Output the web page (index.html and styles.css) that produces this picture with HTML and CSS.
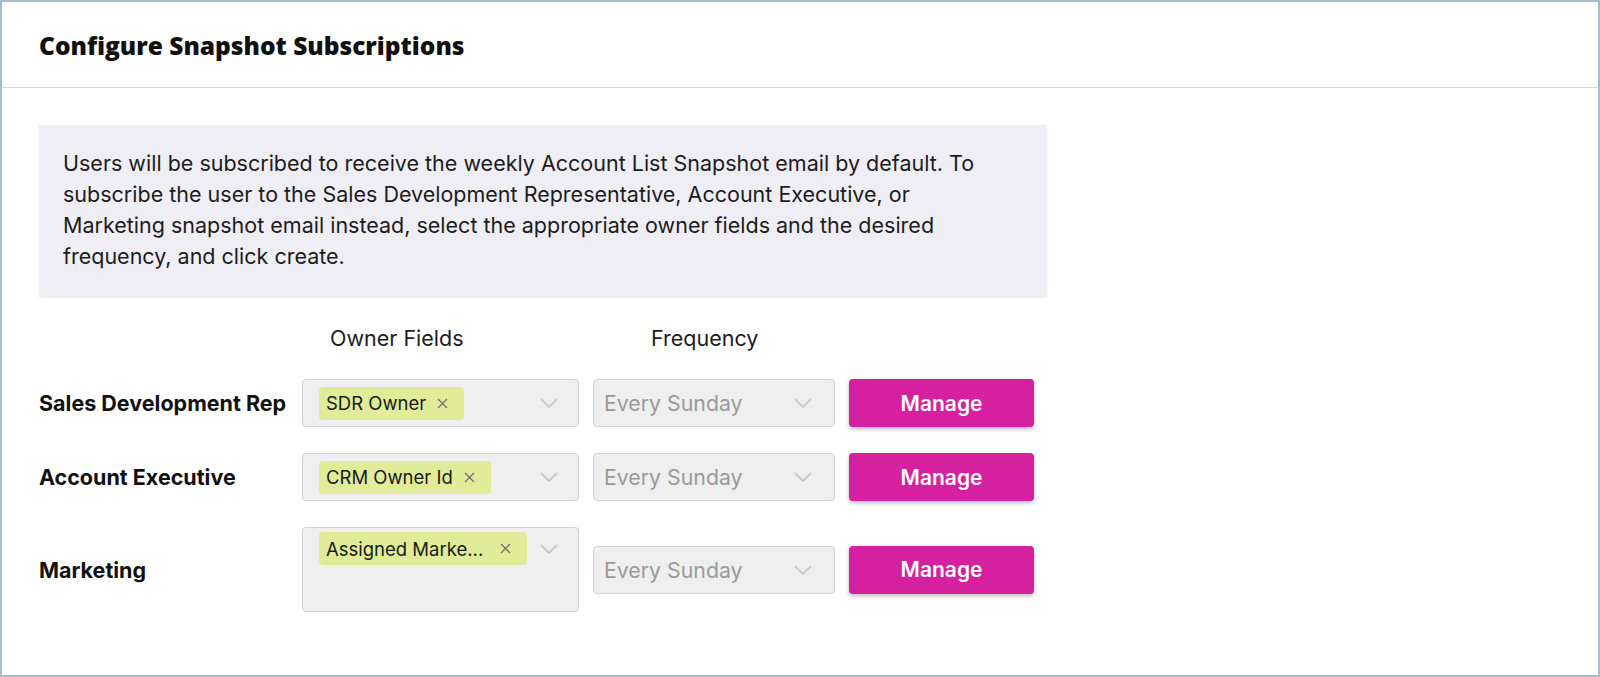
FILE: index.html
```html
<!DOCTYPE html>
<html>
<head>
<meta charset="utf-8">
<link rel="stylesheet" href="styles.css">
</head>
<body>
<div class="frame">
  <header class="header">
    <h1 class="title">Configure Snapshot Subscriptions</h1>
  </header>
  <main class="content">
    <div class="info">
      Users will be subscribed to receive the weekly Account List Snapshot email by default. To subscribe the user to the Sales Development Representative, Account Executive, or Marketing snapshot email instead, select the appropriate owner fields and the desired frequency, and click create.
    </div>
    <div class="grid">
      <div></div>
      <div class="col-head owner-head">Owner Fields</div>
      <div class="col-head freq-head">Frequency</div>
      <div></div>

      <div class="label">Sales Development Rep</div>
      <div class="select owner">
        <div class="chips"><span class="chip"><span class="chip-text">SDR Owner</span><svg class="chip-x" width="11" height="11" viewBox="0 0 11 11"><path d="M1 1L10 10M10 1L1 10" stroke="#707070" stroke-width="1.3"/></svg></span></div>
        <div class="indicator"><svg width="18" height="10" viewBox="0 0 18 10"><polyline points="1,1 9,9 17,1" fill="none" stroke="#cbcbcb" stroke-width="2"/></svg></div>
      </div>
      <div class="select freq">
        <span class="freq-text">Every Sunday</span>
        <div class="indicator"><svg width="18" height="10" viewBox="0 0 18 10"><polyline points="1,1 9,9 17,1" fill="none" stroke="#cbcbcb" stroke-width="2"/></svg></div>
      </div>
      <button class="btn">Manage</button>

      <div class="label">Account Executive</div>
      <div class="select owner">
        <div class="chips"><span class="chip"><span class="chip-text">CRM Owner Id</span><svg class="chip-x" width="11" height="11" viewBox="0 0 11 11"><path d="M1 1L10 10M10 1L1 10" stroke="#707070" stroke-width="1.3"/></svg></span></div>
        <div class="indicator"><svg width="18" height="10" viewBox="0 0 18 10"><polyline points="1,1 9,9 17,1" fill="none" stroke="#cbcbcb" stroke-width="2"/></svg></div>
      </div>
      <div class="select freq">
        <span class="freq-text">Every Sunday</span>
        <div class="indicator"><svg width="18" height="10" viewBox="0 0 18 10"><polyline points="1,1 9,9 17,1" fill="none" stroke="#cbcbcb" stroke-width="2"/></svg></div>
      </div>
      <button class="btn">Manage</button>

      <div class="label">Marketing</div>
      <div class="select owner tall">
        <div class="chips"><span class="chip"><span class="chip-text">Assigned Marke...</span><svg class="chip-x wide" width="11" height="11" viewBox="0 0 11 11"><path d="M1 1L10 10M10 1L1 10" stroke="#707070" stroke-width="1.3"/></svg></span></div>
        <div class="indicator"><svg width="18" height="10" viewBox="0 0 18 10"><polyline points="1,1 9,9 17,1" fill="none" stroke="#cbcbcb" stroke-width="2"/></svg></div>
      </div>
      <div class="select freq">
        <span class="freq-text">Every Sunday</span>
        <div class="indicator"><svg width="18" height="10" viewBox="0 0 18 10"><polyline points="1,1 9,9 17,1" fill="none" stroke="#cbcbcb" stroke-width="2"/></svg></div>
      </div>
      <button class="btn">Manage</button>
    </div>
  </main>
</div>
</body>
</html>
```

FILE: styles.css
```css
* { box-sizing: border-box; }
html, body { margin: 0; padding: 0; background: #fff; }
body { font-family: Inter, "Liberation Sans", sans-serif; color: #1b1b1b; }

.frame {
  width: 1600px;
  height: 677px;
  border: 2px solid #a5bdcb;
  background: #fff;
}

.header {
  height: 86px;
  border-bottom: 1px solid #d3d6d9;
  display: flex;
  align-items: center;
  padding-left: 37px;
}
.title {
  margin: 0;
  font-family: "Open Sans", "DejaVu Sans", sans-serif;
  font-weight: 800;
  font-size: 24.5px;
  color: #111;
  padding-top: 1px;
}

.content {
  padding: 37px 37px 0 37px;
}

.info {
  width: 1008px;
  background: #f0eef5;
  padding: 23px 44px 24px 24px;
  font-size: 21.5px;
  line-height: 31px;
  color: #1c1c1c;
  box-shadow: 0 2px 2px rgba(0,0,0,0.08);
}

.grid {
  display: grid;
  grid-template-columns: 249px 277px 242px 185px;
  column-gap: 14px;
  row-gap: 26px;
  align-items: center;
  margin-top: 27px;
}

.col-head {
  font-size: 21.5px;
  line-height: 30px;
  color: #1c1c1c;
}
.owner-head { padding-left: 28px; }
.freq-head { padding-left: 58px; }

.label {
  font-size: 21.5px;
  font-weight: 700;
  color: #111;
  white-space: nowrap;
}

.select {
  height: 48px;
  background: #efefef;
  border: 1px solid #d2d2d2;
  border-radius: 4px;
  display: flex;
  align-items: center;
}
.owner { padding: 0 20px 0 16px; }
.owner.tall { height: 85px; align-items: flex-start; padding-top: 4px; }
.chips { flex: 1; display: flex; }
.chip {
  display: inline-flex;
  align-items: center;
  height: 33px;
  background: #e1ec99;
  border-radius: 4px;
  padding: 0 16px 0 7px;
  font-size: 18.5px;
  color: #1a1a1a;
}
.chip-x { margin-left: 11px; }
.chip-x.wide { margin-left: 17px; }
.indicator { display: flex; align-items: center; height: 33px; }

.freq { padding: 0 22px 0 10px; justify-content: space-between; }
.freq-text { font-size: 21.3px; color: #9a9a9a; }

.btn {
  height: 48px;
  border: none;
  border-radius: 4px;
  background: #d5209f;
  color: #fff;
  font-family: Inter, "Liberation Sans", sans-serif;
  font-size: 21px;
  font-weight: 600;
  box-shadow: 0 2px 4px rgba(0,0,0,0.28);
  cursor: pointer;
}
```
